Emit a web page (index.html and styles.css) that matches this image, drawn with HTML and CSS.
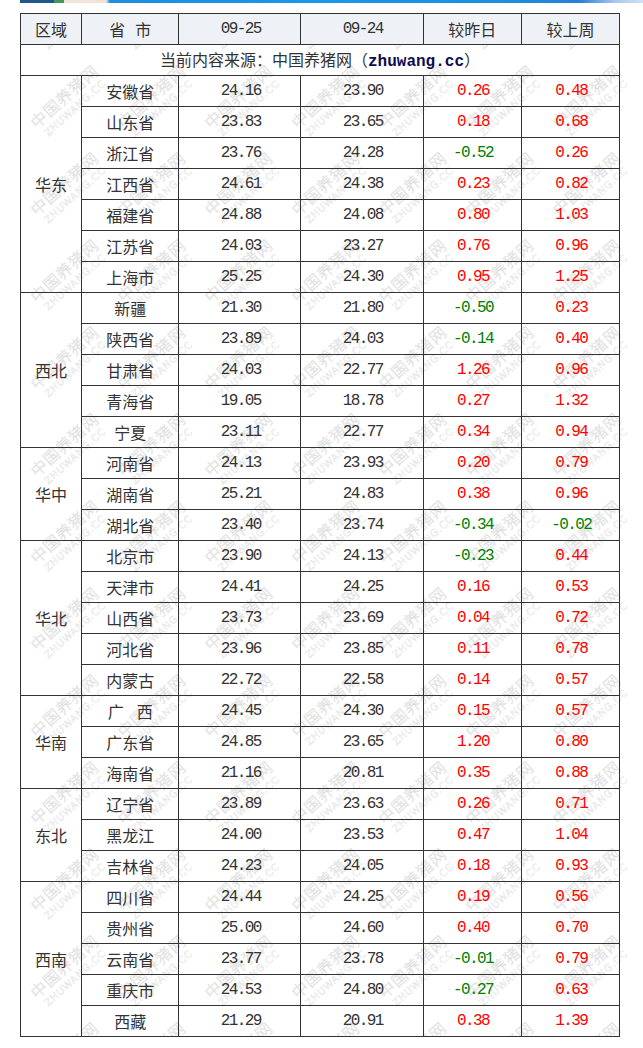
FILE: index.html
```html
<!DOCTYPE html>
<html lang="zh-CN">
<head>
<meta charset="utf-8">
<title>生猪价格</title>
<link rel="stylesheet" href="styles.css">
</head>
<body>
<div class="banner"></div>
<div class="wrap">
  <div class="wm-layer" aria-hidden="true">
    <div class="wm-grid">
      <div class="wm"><div class="mark"><span class="cn">中国养猪网</span><span class="en">ZHUWANG.CC</span></div></div><div class="wm"><div class="mark"><span class="cn">中国养猪网</span><span class="en">ZHUWANG.CC</span></div></div><div class="wm"><div class="mark"><span class="cn">中国养猪网</span><span class="en">ZHUWANG.CC</span></div></div><div class="wm"><div class="mark"><span class="cn">中国养猪网</span><span class="en">ZHUWANG.CC</span></div></div><div class="wm"><div class="mark"><span class="cn">中国养猪网</span><span class="en">ZHUWANG.CC</span></div></div><div class="wm"><div class="mark"><span class="cn">中国养猪网</span><span class="en">ZHUWANG.CC</span></div></div><div class="wm"><div class="mark"><span class="cn">中国养猪网</span><span class="en">ZHUWANG.CC</span></div></div><div class="wm"><div class="mark"><span class="cn">中国养猪网</span><span class="en">ZHUWANG.CC</span></div></div>
      <div class="wm"><div class="mark"><span class="cn">中国养猪网</span><span class="en">ZHUWANG.CC</span></div></div><div class="wm"><div class="mark"><span class="cn">中国养猪网</span><span class="en">ZHUWANG.CC</span></div></div><div class="wm"><div class="mark"><span class="cn">中国养猪网</span><span class="en">ZHUWANG.CC</span></div></div><div class="wm"><div class="mark"><span class="cn">中国养猪网</span><span class="en">ZHUWANG.CC</span></div></div><div class="wm"><div class="mark"><span class="cn">中国养猪网</span><span class="en">ZHUWANG.CC</span></div></div><div class="wm"><div class="mark"><span class="cn">中国养猪网</span><span class="en">ZHUWANG.CC</span></div></div><div class="wm"><div class="mark"><span class="cn">中国养猪网</span><span class="en">ZHUWANG.CC</span></div></div><div class="wm"><div class="mark"><span class="cn">中国养猪网</span><span class="en">ZHUWANG.CC</span></div></div>
      <div class="wm"><div class="mark"><span class="cn">中国养猪网</span><span class="en">ZHUWANG.CC</span></div></div><div class="wm"><div class="mark"><span class="cn">中国养猪网</span><span class="en">ZHUWANG.CC</span></div></div><div class="wm"><div class="mark"><span class="cn">中国养猪网</span><span class="en">ZHUWANG.CC</span></div></div><div class="wm"><div class="mark"><span class="cn">中国养猪网</span><span class="en">ZHUWANG.CC</span></div></div><div class="wm"><div class="mark"><span class="cn">中国养猪网</span><span class="en">ZHUWANG.CC</span></div></div><div class="wm"><div class="mark"><span class="cn">中国养猪网</span><span class="en">ZHUWANG.CC</span></div></div><div class="wm"><div class="mark"><span class="cn">中国养猪网</span><span class="en">ZHUWANG.CC</span></div></div><div class="wm"><div class="mark"><span class="cn">中国养猪网</span><span class="en">ZHUWANG.CC</span></div></div>
      <div class="wm"><div class="mark"><span class="cn">中国养猪网</span><span class="en">ZHUWANG.CC</span></div></div><div class="wm"><div class="mark"><span class="cn">中国养猪网</span><span class="en">ZHUWANG.CC</span></div></div><div class="wm"><div class="mark"><span class="cn">中国养猪网</span><span class="en">ZHUWANG.CC</span></div></div><div class="wm"><div class="mark"><span class="cn">中国养猪网</span><span class="en">ZHUWANG.CC</span></div></div><div class="wm"><div class="mark"><span class="cn">中国养猪网</span><span class="en">ZHUWANG.CC</span></div></div><div class="wm"><div class="mark"><span class="cn">中国养猪网</span><span class="en">ZHUWANG.CC</span></div></div><div class="wm"><div class="mark"><span class="cn">中国养猪网</span><span class="en">ZHUWANG.CC</span></div></div><div class="wm"><div class="mark"><span class="cn">中国养猪网</span><span class="en">ZHUWANG.CC</span></div></div>
      <div class="wm"><div class="mark"><span class="cn">中国养猪网</span><span class="en">ZHUWANG.CC</span></div></div><div class="wm"><div class="mark"><span class="cn">中国养猪网</span><span class="en">ZHUWANG.CC</span></div></div><div class="wm"><div class="mark"><span class="cn">中国养猪网</span><span class="en">ZHUWANG.CC</span></div></div><div class="wm"><div class="mark"><span class="cn">中国养猪网</span><span class="en">ZHUWANG.CC</span></div></div><div class="wm"><div class="mark"><span class="cn">中国养猪网</span><span class="en">ZHUWANG.CC</span></div></div><div class="wm"><div class="mark"><span class="cn">中国养猪网</span><span class="en">ZHUWANG.CC</span></div></div><div class="wm"><div class="mark"><span class="cn">中国养猪网</span><span class="en">ZHUWANG.CC</span></div></div><div class="wm"><div class="mark"><span class="cn">中国养猪网</span><span class="en">ZHUWANG.CC</span></div></div>
      <div class="wm"><div class="mark"><span class="cn">中国养猪网</span><span class="en">ZHUWANG.CC</span></div></div><div class="wm"><div class="mark"><span class="cn">中国养猪网</span><span class="en">ZHUWANG.CC</span></div></div><div class="wm"><div class="mark"><span class="cn">中国养猪网</span><span class="en">ZHUWANG.CC</span></div></div><div class="wm"><div class="mark"><span class="cn">中国养猪网</span><span class="en">ZHUWANG.CC</span></div></div><div class="wm"><div class="mark"><span class="cn">中国养猪网</span><span class="en">ZHUWANG.CC</span></div></div><div class="wm"><div class="mark"><span class="cn">中国养猪网</span><span class="en">ZHUWANG.CC</span></div></div><div class="wm"><div class="mark"><span class="cn">中国养猪网</span><span class="en">ZHUWANG.CC</span></div></div><div class="wm"><div class="mark"><span class="cn">中国养猪网</span><span class="en">ZHUWANG.CC</span></div></div>
      <div class="wm"><div class="mark"><span class="cn">中国养猪网</span><span class="en">ZHUWANG.CC</span></div></div><div class="wm"><div class="mark"><span class="cn">中国养猪网</span><span class="en">ZHUWANG.CC</span></div></div><div class="wm"><div class="mark"><span class="cn">中国养猪网</span><span class="en">ZHUWANG.CC</span></div></div><div class="wm"><div class="mark"><span class="cn">中国养猪网</span><span class="en">ZHUWANG.CC</span></div></div><div class="wm"><div class="mark"><span class="cn">中国养猪网</span><span class="en">ZHUWANG.CC</span></div></div><div class="wm"><div class="mark"><span class="cn">中国养猪网</span><span class="en">ZHUWANG.CC</span></div></div><div class="wm"><div class="mark"><span class="cn">中国养猪网</span><span class="en">ZHUWANG.CC</span></div></div><div class="wm"><div class="mark"><span class="cn">中国养猪网</span><span class="en">ZHUWANG.CC</span></div></div>
      <div class="wm"><div class="mark"><span class="cn">中国养猪网</span><span class="en">ZHUWANG.CC</span></div></div><div class="wm"><div class="mark"><span class="cn">中国养猪网</span><span class="en">ZHUWANG.CC</span></div></div><div class="wm"><div class="mark"><span class="cn">中国养猪网</span><span class="en">ZHUWANG.CC</span></div></div><div class="wm"><div class="mark"><span class="cn">中国养猪网</span><span class="en">ZHUWANG.CC</span></div></div><div class="wm"><div class="mark"><span class="cn">中国养猪网</span><span class="en">ZHUWANG.CC</span></div></div><div class="wm"><div class="mark"><span class="cn">中国养猪网</span><span class="en">ZHUWANG.CC</span></div></div><div class="wm"><div class="mark"><span class="cn">中国养猪网</span><span class="en">ZHUWANG.CC</span></div></div><div class="wm"><div class="mark"><span class="cn">中国养猪网</span><span class="en">ZHUWANG.CC</span></div></div>
      <div class="wm"><div class="mark"><span class="cn">中国养猪网</span><span class="en">ZHUWANG.CC</span></div></div><div class="wm"><div class="mark"><span class="cn">中国养猪网</span><span class="en">ZHUWANG.CC</span></div></div><div class="wm"><div class="mark"><span class="cn">中国养猪网</span><span class="en">ZHUWANG.CC</span></div></div><div class="wm"><div class="mark"><span class="cn">中国养猪网</span><span class="en">ZHUWANG.CC</span></div></div><div class="wm"><div class="mark"><span class="cn">中国养猪网</span><span class="en">ZHUWANG.CC</span></div></div><div class="wm"><div class="mark"><span class="cn">中国养猪网</span><span class="en">ZHUWANG.CC</span></div></div><div class="wm"><div class="mark"><span class="cn">中国养猪网</span><span class="en">ZHUWANG.CC</span></div></div><div class="wm"><div class="mark"><span class="cn">中国养猪网</span><span class="en">ZHUWANG.CC</span></div></div>
      <div class="wm"><div class="mark"><span class="cn">中国养猪网</span><span class="en">ZHUWANG.CC</span></div></div><div class="wm"><div class="mark"><span class="cn">中国养猪网</span><span class="en">ZHUWANG.CC</span></div></div><div class="wm"><div class="mark"><span class="cn">中国养猪网</span><span class="en">ZHUWANG.CC</span></div></div><div class="wm"><div class="mark"><span class="cn">中国养猪网</span><span class="en">ZHUWANG.CC</span></div></div><div class="wm"><div class="mark"><span class="cn">中国养猪网</span><span class="en">ZHUWANG.CC</span></div></div><div class="wm"><div class="mark"><span class="cn">中国养猪网</span><span class="en">ZHUWANG.CC</span></div></div><div class="wm"><div class="mark"><span class="cn">中国养猪网</span><span class="en">ZHUWANG.CC</span></div></div><div class="wm"><div class="mark"><span class="cn">中国养猪网</span><span class="en">ZHUWANG.CC</span></div></div>
      <div class="wm"><div class="mark"><span class="cn">中国养猪网</span><span class="en">ZHUWANG.CC</span></div></div><div class="wm"><div class="mark"><span class="cn">中国养猪网</span><span class="en">ZHUWANG.CC</span></div></div><div class="wm"><div class="mark"><span class="cn">中国养猪网</span><span class="en">ZHUWANG.CC</span></div></div><div class="wm"><div class="mark"><span class="cn">中国养猪网</span><span class="en">ZHUWANG.CC</span></div></div><div class="wm"><div class="mark"><span class="cn">中国养猪网</span><span class="en">ZHUWANG.CC</span></div></div><div class="wm"><div class="mark"><span class="cn">中国养猪网</span><span class="en">ZHUWANG.CC</span></div></div><div class="wm"><div class="mark"><span class="cn">中国养猪网</span><span class="en">ZHUWANG.CC</span></div></div><div class="wm"><div class="mark"><span class="cn">中国养猪网</span><span class="en">ZHUWANG.CC</span></div></div>
      <div class="wm"><div class="mark"><span class="cn">中国养猪网</span><span class="en">ZHUWANG.CC</span></div></div><div class="wm"><div class="mark"><span class="cn">中国养猪网</span><span class="en">ZHUWANG.CC</span></div></div><div class="wm"><div class="mark"><span class="cn">中国养猪网</span><span class="en">ZHUWANG.CC</span></div></div><div class="wm"><div class="mark"><span class="cn">中国养猪网</span><span class="en">ZHUWANG.CC</span></div></div><div class="wm"><div class="mark"><span class="cn">中国养猪网</span><span class="en">ZHUWANG.CC</span></div></div><div class="wm"><div class="mark"><span class="cn">中国养猪网</span><span class="en">ZHUWANG.CC</span></div></div><div class="wm"><div class="mark"><span class="cn">中国养猪网</span><span class="en">ZHUWANG.CC</span></div></div><div class="wm"><div class="mark"><span class="cn">中国养猪网</span><span class="en">ZHUWANG.CC</span></div></div>
      <div class="wm"><div class="mark"><span class="cn">中国养猪网</span><span class="en">ZHUWANG.CC</span></div></div><div class="wm"><div class="mark"><span class="cn">中国养猪网</span><span class="en">ZHUWANG.CC</span></div></div><div class="wm"><div class="mark"><span class="cn">中国养猪网</span><span class="en">ZHUWANG.CC</span></div></div><div class="wm"><div class="mark"><span class="cn">中国养猪网</span><span class="en">ZHUWANG.CC</span></div></div><div class="wm"><div class="mark"><span class="cn">中国养猪网</span><span class="en">ZHUWANG.CC</span></div></div><div class="wm"><div class="mark"><span class="cn">中国养猪网</span><span class="en">ZHUWANG.CC</span></div></div><div class="wm"><div class="mark"><span class="cn">中国养猪网</span><span class="en">ZHUWANG.CC</span></div></div><div class="wm"><div class="mark"><span class="cn">中国养猪网</span><span class="en">ZHUWANG.CC</span></div></div>
    </div>
  </div>
  <table class="price">
    <colgroup>
      <col class="c-area"><col class="c-prov"><col class="c-day"><col class="c-day"><col class="c-chg"><col class="c-chg">
    </colgroup>
    <thead>
      <tr><th>区域</th><th>省<span class="sp"></span>市</th><th class="num">09-25</th><th class="num">09-24</th><th>较昨日</th><th>较上周</th></tr>
    </thead>
    <tbody>
      <tr><td colspan="6" class="source">当前内容来源：中国养猪网（<b class="site">zhuwang.cc</b>）</td></tr>
      <tr><td rowspan="7">华东</td><td>安徽省</td><td class="num">24.16</td><td class="num">23.90</td><td class="num up">0.26</td><td class="num up">0.48</td></tr>
      <tr><td>山东省</td><td class="num">23.83</td><td class="num">23.65</td><td class="num up">0.18</td><td class="num up">0.68</td></tr>
      <tr><td>浙江省</td><td class="num">23.76</td><td class="num">24.28</td><td class="num down">-0.52</td><td class="num up">0.26</td></tr>
      <tr><td>江西省</td><td class="num">24.61</td><td class="num">24.38</td><td class="num up">0.23</td><td class="num up">0.82</td></tr>
      <tr><td>福建省</td><td class="num">24.88</td><td class="num">24.08</td><td class="num up">0.80</td><td class="num up">1.03</td></tr>
      <tr><td>江苏省</td><td class="num">24.03</td><td class="num">23.27</td><td class="num up">0.76</td><td class="num up">0.96</td></tr>
      <tr><td>上海市</td><td class="num">25.25</td><td class="num">24.30</td><td class="num up">0.95</td><td class="num up">1.25</td></tr>
      <tr><td rowspan="5">西北</td><td>新疆</td><td class="num">21.30</td><td class="num">21.80</td><td class="num down">-0.50</td><td class="num up">0.23</td></tr>
      <tr><td>陕西省</td><td class="num">23.89</td><td class="num">24.03</td><td class="num down">-0.14</td><td class="num up">0.40</td></tr>
      <tr><td>甘肃省</td><td class="num">24.03</td><td class="num">22.77</td><td class="num up">1.26</td><td class="num up">0.96</td></tr>
      <tr><td>青海省</td><td class="num">19.05</td><td class="num">18.78</td><td class="num up">0.27</td><td class="num up">1.32</td></tr>
      <tr><td>宁夏</td><td class="num">23.11</td><td class="num">22.77</td><td class="num up">0.34</td><td class="num up">0.94</td></tr>
      <tr><td rowspan="3">华中</td><td>河南省</td><td class="num">24.13</td><td class="num">23.93</td><td class="num up">0.20</td><td class="num up">0.79</td></tr>
      <tr><td>湖南省</td><td class="num">25.21</td><td class="num">24.83</td><td class="num up">0.38</td><td class="num up">0.96</td></tr>
      <tr><td>湖北省</td><td class="num">23.40</td><td class="num">23.74</td><td class="num down">-0.34</td><td class="num down">-0.02</td></tr>
      <tr><td rowspan="5">华北</td><td>北京市</td><td class="num">23.90</td><td class="num">24.13</td><td class="num down">-0.23</td><td class="num up">0.44</td></tr>
      <tr><td>天津市</td><td class="num">24.41</td><td class="num">24.25</td><td class="num up">0.16</td><td class="num up">0.53</td></tr>
      <tr><td>山西省</td><td class="num">23.73</td><td class="num">23.69</td><td class="num up">0.04</td><td class="num up">0.72</td></tr>
      <tr><td>河北省</td><td class="num">23.96</td><td class="num">23.85</td><td class="num up">0.11</td><td class="num up">0.78</td></tr>
      <tr><td>内蒙古</td><td class="num">22.72</td><td class="num">22.58</td><td class="num up">0.14</td><td class="num up">0.57</td></tr>
      <tr><td rowspan="3">华南</td><td>广<span class="sp2"></span>西</td><td class="num">24.45</td><td class="num">24.30</td><td class="num up">0.15</td><td class="num up">0.57</td></tr>
      <tr><td>广东省</td><td class="num">24.85</td><td class="num">23.65</td><td class="num up">1.20</td><td class="num up">0.80</td></tr>
      <tr><td>海南省</td><td class="num">21.16</td><td class="num">20.81</td><td class="num up">0.35</td><td class="num up">0.88</td></tr>
      <tr><td rowspan="3">东北</td><td>辽宁省</td><td class="num">23.89</td><td class="num">23.63</td><td class="num up">0.26</td><td class="num up">0.71</td></tr>
      <tr><td>黑龙江</td><td class="num">24.00</td><td class="num">23.53</td><td class="num up">0.47</td><td class="num up">1.04</td></tr>
      <tr><td>吉林省</td><td class="num">24.23</td><td class="num">24.05</td><td class="num up">0.18</td><td class="num up">0.93</td></tr>
      <tr><td rowspan="5">西南</td><td>四川省</td><td class="num">24.44</td><td class="num">24.25</td><td class="num up">0.19</td><td class="num up">0.56</td></tr>
      <tr><td>贵州省</td><td class="num">25.00</td><td class="num">24.60</td><td class="num up">0.40</td><td class="num up">0.70</td></tr>
      <tr><td>云南省</td><td class="num">23.77</td><td class="num">23.78</td><td class="num down">-0.01</td><td class="num up">0.79</td></tr>
      <tr><td>重庆市</td><td class="num">24.53</td><td class="num">24.80</td><td class="num down">-0.27</td><td class="num up">0.63</td></tr>
      <tr><td>西藏</td><td class="num">21.29</td><td class="num">20.91</td><td class="num up">0.38</td><td class="num up">1.39</td></tr>
    </tbody>
  </table>
</div>
</body>
</html>
```
FILE: styles.css
```css
html, body {
  margin: 0;
  padding: 0;
  background: #ffffff;
}
body {
  font-family: "Noto Sans CJK SC", "Noto Sans", sans-serif;
  color: #333333;
  width: 643px;
  height: 1048px;
  overflow: hidden;
}
.banner {
  height: 3px;
  margin-left: 20px;
  background: linear-gradient(to right,
    #1d5a8a 0, #1d5a8a 34px,
    #3d9a62 34px, #3d9a62 44px,
    #f2e6dc 44px, #efe3dc 86px,
    #1a8fe0 90px, #1d97e8 300px, #1a8fe0 480px,
    #2a7fd6 560px, #a8c8ee 595px, #d0e1f4 623px);
}
.wrap {
  position: relative;
  margin: 10px 0 0 20px;
  width: 623px;
}
.wm-layer {
  position: absolute;
  inset: 0;
  overflow: hidden;
  z-index: 0;
  pointer-events: none;
}
.wm-grid {
  position: absolute;
  left: -82px;
  top: -43px;
  display: grid;
  grid-template-columns: repeat(8, 87px);
  grid-auto-rows: 87px;
}
.wm {
  display: flex;
  align-items: center;
  justify-content: center;
  overflow: visible;
}
.mark {
  display: flex;
  flex-direction: column;
  align-items: center;
  flex: none;
  transform: rotate(-42deg);
}
.mark .cn {
  font-family: "Noto Sans CJK SC", sans-serif;
  font-size: 16px;
  font-weight: 300;
  line-height: 18px;
  letter-spacing: 1px;
  white-space: nowrap;
  color: #ffffff;
  -webkit-text-stroke: 0.45px #d9d9d9;
}
.mark .en {
  font-family: "DejaVu Sans", sans-serif;
  font-size: 10px;
  line-height: 12px;
  letter-spacing: 0.8px;
  white-space: nowrap;
  color: #ffffff;
  -webkit-text-stroke: 0.35px #d9d9d9;
  margin-top: 2px;
}
.price {
  position: relative;
  z-index: 1;
  border-collapse: collapse;
  table-layout: fixed;
  width: 600px;
}
.c-area { width: 61px; }
.c-prov { width: 97px; }
.c-day { width: 122px; }
.c-chg { width: 98px; }
.price th,
.price td {
  border: 1px solid #333333;
  height: 30px;
  padding: 0;
  text-align: center;
  vertical-align: middle;
  font-size: 16px;
  font-weight: normal;
  line-height: 20px;
  white-space: nowrap;
}
.price thead th {
  background: #eef2f7;
}
.num {
  font-family: "Liberation Mono", "DejaVu Sans Mono", monospace;
  letter-spacing: -1.6px;
  text-indent: 1.6px;
}
.up { color: #ff0000; }
.down { color: #008000; }
.sp {
  display: inline-block;
  width: 10px;
}
.sp2 {
  display: inline-block;
  width: 13px;
}
.site {
  font-family: "Liberation Mono", monospace;
  font-weight: bold;
  color: #0d0d4d;
}
```
